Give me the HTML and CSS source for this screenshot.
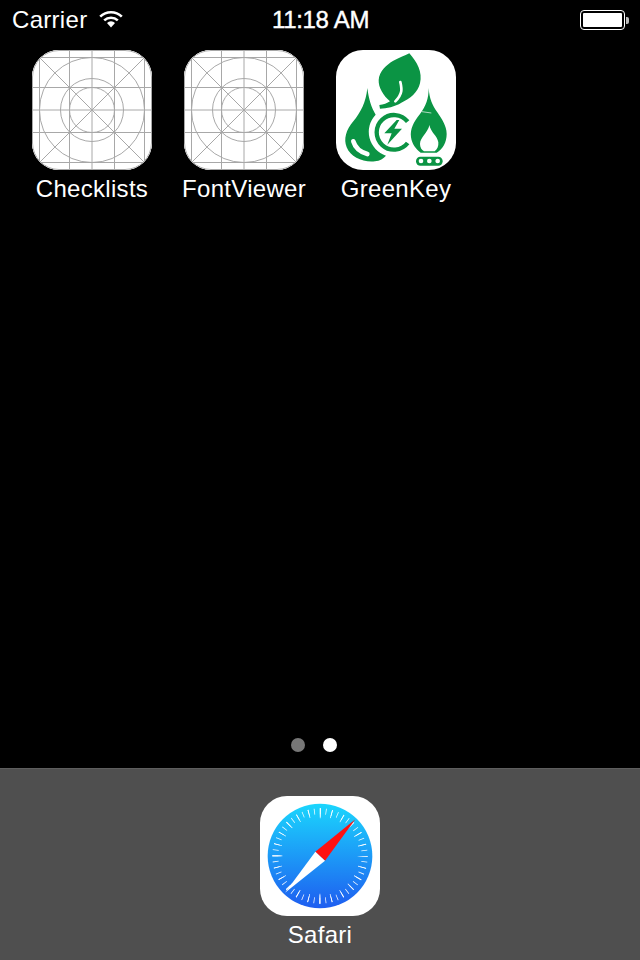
FILE: index.html
```html
<!DOCTYPE html>
<html lang="en">
<head>
    <meta charset="UTF-8">
    <meta name="viewport" content="width=device-width, initial-scale=1.0">
    <title>Home Screen</title>
    <link rel="stylesheet" href="styles.css">
</head>
<body>
    <div class="screen">
        <div class="status-bar">
            <div class="status-left">
                <span class="carrier">Carrier</span>
                <svg class="wifi" viewBox="0 0 24 18" width="24" height="18">
                    <path d="M1.2 6.6 A15.5 15.5 0 0 1 22.8 6.6" fill="none" stroke="#fff" stroke-width="2.6"/>
                    <path d="M5.2 10.4 A10 10 0 0 1 18.8 10.4" fill="none" stroke="#fff" stroke-width="2.6"/>
                    <path d="M8 13 L12 17.4 L16 13 A5.6 5.6 0 0 0 8 13 Z" fill="#fff"/>
                </svg>
            </div>
            <span class="time">11:18 AM</span>
            <div class="battery">
                <div class="battery-body"><div class="battery-fill"></div></div>
                <div class="battery-nub"></div>
            </div>
        </div>

        <div class="app-grid">
            <div class="app">
                <div class="app-icon">
                    <svg viewBox="0 0 120 120" width="120" height="120"><use href="#icon-grid"/></svg>
                </div>
                <span class="app-name">Checklists</span>
            </div>
            <div class="app">
                <div class="app-icon">
                    <svg viewBox="0 0 120 120" width="120" height="120"><use href="#icon-grid"/></svg>
                </div>
                <span class="app-name">FontViewer</span>
            </div>
            <div class="app">
                <div class="app-icon">
                    <svg viewBox="18 18 360 360" width="120" height="120">
                        <g fill="#0b9444">
                            <!-- leaf -->
                            <path d="M238 28 C262 55 278 85 270 118 C264 145 240 165 214 176 C195 188 170 193 150 194 L148 183 C160 182 172 178 180 172 C160 155 145 130 146 108 C148 80 170 62 190 50 C205 42 225 35 238 28 Z"/>
                            <!-- left drop -->
                            <path d="M112 132 C108 175 92 205 70 232 C48 258 40 285 50 310 C62 340 100 356 135 352 C150 350 160 344 168 335 A75 75 0 0 1 137 212 C124 190 116 165 112 132 Z"/>
                            <!-- bolt -->
                            <path d="M200 228 L163 268 L185 268 L172 302 L216 254 L193 254 L208 228 Z"/>
                            <!-- flame -->
                            <path fill-rule="evenodd" d="M296 132 C296 165 288 185 270 210 C250 235 240 255 243 280 C246 300 258 316 272 326 L320 326 C338 316 350 295 350 270 C350 245 335 225 322 205 C308 185 298 165 296 132 Z M298 243 C295 265 270 280 270 300 C270 310 275 318 282 322 L314 322 C322 316 326 306 325 295 C322 275 302 265 298 243 Z"/>
                            <!-- burner -->
                            <rect x="258" y="338" width="80" height="27" rx="13"/>
                        </g>
                        <path d="M233 233 A52 52 0 1 0 233 297" fill="none" stroke="#0b9444" stroke-width="13"/>
                        <path d="M211 114 C216 135 218 150 196 172" fill="none" stroke="#fff" stroke-width="8" stroke-linecap="round"/>
                        <path d="M276 203 L304 207" stroke="#fff" stroke-width="2" fill="none"/>
                        <circle cx="273" cy="351" r="7" fill="#fff"/>
                        <circle cx="298" cy="351" r="7" fill="#fff"/>
                        <circle cx="323" cy="351" r="7" fill="#fff"/>
                        <path d="M70 292 Q78 320 112 330" fill="none" stroke="#fff" stroke-width="14" stroke-linecap="round"/>
                    </svg>
                </div>
                <span class="app-name">GreenKey</span>
            </div>
        </div>

        <div class="page-dots">
            <span class="dot"></span>
            <span class="dot dot-active"></span>
        </div>

        <div class="dock">
            <div class="app">
                <div class="app-icon">
                    <svg viewBox="30 18 360 360" width="120" height="120">
                        <defs>
                            <linearGradient id="safari-blue" x1="0" y1="0" x2="0" y2="1">
                                <stop offset="0" stop-color="#1bd6fd"/>
                                <stop offset="1" stop-color="#1e5df0"/>
                            </linearGradient>
                        </defs>
                        <circle cx="210" cy="198" r="157" fill="url(#safari-blue)"/>
                        <g fill="none" stroke="#fff">
                            <circle cx="210" cy="198" r="134" stroke-width="18" pathLength="360" stroke-dasharray="1 6.5" stroke-dashoffset="0.5" stroke-opacity="0.9"/>
                            <circle cx="210" cy="198" r="130.5" stroke-width="25" pathLength="360" stroke-dasharray="1 14" stroke-dashoffset="0.5"/>
                            <circle cx="210" cy="198" r="128" stroke-width="30" pathLength="360" stroke-dasharray="1 89" stroke-dashoffset="0.5"/>
                        </g>
                        <path d="M316 88 L196 185 L225 212 Z" fill="#fe1111"/>
                        <path d="M105 308 L196 185 L225 212 Z" fill="#fff"/>
                    </svg>
                </div>
                <span class="app-name">Safari</span>
            </div>
        </div>
    </div>

    <svg class="defs" width="0" height="0">
        <g id="icon-grid" fill="none" stroke="#a8a8a8" stroke-width="1">
            <rect width="120" height="120" fill="#fff" stroke="none"/>
            <path d="M37.5 0V120M60 0V120M82.5 0V120M0 37.5H120M0 60H120M0 82.5H120"/>
            <rect x="7.5" y="7.5" width="105" height="105"/>
            <path d="M7.5 7.5L112.5 112.5M112.5 7.5L7.5 112.5"/>
            <circle cx="60" cy="60" r="52.5"/>
            <circle cx="60" cy="60" r="31.5"/>
            <circle cx="60" cy="60" r="22.5"/>
            <rect x="0.5" y="0.5" width="119" height="119" rx="26.5"/>
        </g>
    </svg>
</body>
</html>
```

FILE: styles.css
```css
* {
    margin: 0;
    padding: 0;
    box-sizing: border-box;
}

body {
    font-family: "Liberation Sans", Arial, sans-serif;
    background-color: #000;
    color: #fff;
}

.screen {
    display: flex;
    flex-direction: column;
    width: 640px;
    height: 960px;
    overflow: hidden;
}

.status-bar {
    display: grid;
    grid-template-columns: 1fr auto 1fr;
    align-items: center;
    height: 40px;
    padding: 0 11px 0 12px;
    font-size: 24px;
}

.status-left {
    display: flex;
    align-items: center;
    gap: 12px;
}

.carrier {
    letter-spacing: 0.3px;
}

.wifi {
    margin-top: -3px;
}

.time {
    letter-spacing: -0.3px;
    -webkit-text-stroke: 0.4px #fff;
}

.battery {
    display: flex;
    align-items: center;
    justify-self: end;
}

.battery-body {
    width: 45px;
    height: 20px;
    padding: 2px;
    border: 1.5px solid #fff;
    border-radius: 4px;
}

.battery-fill {
    height: 100%;
    background: #fff;
    border-radius: 1px;
}

.battery-nub {
    width: 3px;
    height: 7px;
    margin-left: 1px;
    background: #bbb;
    border-radius: 0 2px 2px 0;
}

.app-grid {
    display: flex;
    flex: 1;
    gap: 32px;
    padding: 10px 32px 0;
}

.app {
    display: flex;
    flex-direction: column;
    align-items: center;
    width: 120px;
}

.app-icon {
    width: 120px;
    height: 120px;
    background: #fff;
    border-radius: 27px;
    overflow: hidden;
}

.app-icon svg {
    display: block;
}

.app-name {
    margin-top: 5px;
    font-size: 24px;
    line-height: 28px;
    letter-spacing: 0.3px;
    white-space: nowrap;
}

.page-dots {
    display: flex;
    justify-content: center;
    gap: 18px;
    padding: 0 12px 16px 0;
}

.dot {
    width: 14px;
    height: 14px;
    background: #777;
    border-radius: 50%;
}

.dot-active {
    background: #fff;
}

.dock {
    display: flex;
    justify-content: center;
    height: 192px;
    padding-top: 27px;
    background: #4f4f4f;
    border-top: 1px solid #5e5e5e;
}

.defs {
    position: absolute;
}
```
